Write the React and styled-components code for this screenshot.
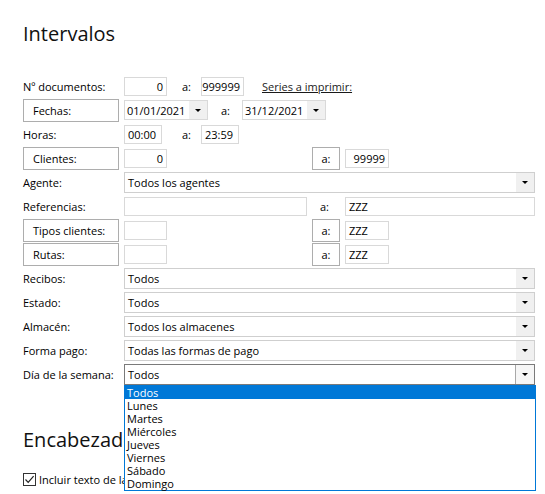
import React from 'react';
import styled, { createGlobalStyle, css } from 'styled-components';

const GlobalStyle = createGlobalStyle`
  html, body {
    margin: 0;
    padding: 0;
    background: #fff;
  }
  body {
    font-family: 'Open Sans', 'Noto Sans', 'DejaVu Sans', sans-serif;
    font-size: 11px;
    color: #000;
  }
`;

const Page = styled.div`
  width: 545px;
  height: 494px;
  overflow: hidden;
  padding-left: 23px;
  box-sizing: border-box;
`;

const Heading = styled.h2`
  margin: 0;
  font-size: 20px;
  font-weight: 400;
  line-height: 30px;
  color: #111;
  padding-top: ${(p) => p.$top || 0}px;
  white-space: nowrap;
`;

const Form = styled.div`
  margin-top: 25px;
`;

const Row = styled.div`
  position: relative;
  display: flex;
  align-items: center;
  height: 24px;
`;

const Label = styled.div`
  width: 101px;
  flex-shrink: 0;
  white-space: nowrap;
`;

const LabelButton = styled.div`
  width: 96px;
  height: 23px;
  margin-right: 5px;
  box-sizing: border-box;
  border: 1px solid #adadad;
  padding-left: 9px;
  display: flex;
  align-items: center;
  flex-shrink: 0;
  background: #fff;
`;

const ToLabel = styled.div`
  width: ${(p) => p.$w}px;
  padding-left: ${(p) => p.$pad}px;
  box-sizing: border-box;
  flex-shrink: 0;
`;

const ToButton = styled.div`
  width: 28px;
  height: 23px;
  margin-left: ${(p) => p.$left}px;
  margin-right: 5px;
  box-sizing: border-box;
  border: 1px solid #adadad;
  display: flex;
  align-items: center;
  justify-content: center;
  flex-shrink: 0;
`;

const TextBox = styled.div`
  width: ${(p) => p.$w}px;
  height: 19px;
  box-sizing: border-box;
  border: 1px solid #d9d9d9;
  padding: 0 3px;
  display: flex;
  align-items: center;
  justify-content: ${(p) => (p.$right ? 'flex-end' : 'flex-start')};
  flex-shrink: 0;
  white-space: nowrap;
`;

const Arrow = styled.span`
  width: 0;
  height: 0;
  border-left: 3px solid transparent;
  border-right: 3px solid transparent;
  border-top: 3px solid #000;
`;

const ArrowBox = styled.div`
  width: 18px;
  align-self: stretch;
  background: #f0f0f0;
  display: flex;
  align-items: center;
  justify-content: center;
  ${(p) =>
    p.$focused &&
    css`
      background: #f6f6f6;
      border-left: 1px solid #a8a8a8;
    `}
`;

const DateBox = styled.div`
  width: 84px;
  height: 20px;
  box-sizing: border-box;
  border: 1px solid #d9d9d9;
  display: flex;
  align-items: center;
  flex-shrink: 0;
  span.value {
    flex: 1;
    padding-left: 2px;
  }
`;

const SeriesLink = styled.span`
  margin-left: 18px;
  text-decoration: underline;
  color: #1a1a1a;
  white-space: nowrap;
`;

const SelectWrap = styled.div`
  position: relative;
  width: 411px;
  flex-shrink: 0;
`;

const SelectBox = styled.div`
  height: 21px;
  box-sizing: border-box;
  border: 1px solid ${(p) => (p.$focused ? '#7a7a7a' : '#cfcfcf')};
  display: flex;
  align-items: center;
  span.value {
    flex: 1;
    padding-left: 3px;
  }
`;

const DropList = styled.ul`
  position: absolute;
  top: 100%;
  left: 0;
  width: 412px;
  margin: 0;
  padding: 0;
  list-style: none;
  box-sizing: border-box;
  border: 1px solid #0078d7;
  background: #fff;
  z-index: 10;
`;

const DropItem = styled.li`
  height: 13px;
  line-height: 13px;
  padding-left: 2px;
  ${(p) =>
    p.$active &&
    css`
      background: #0078d7;
      color: #fff;
    `}
`;

const CheckRow = styled.div`
  display: flex;
  align-items: center;
  margin-top: 17px;
  gap: 3px;
  white-space: nowrap;
`;

const CheckBox = styled.span`
  width: 13px;
  height: 13px;
  box-sizing: border-box;
  border: 1px solid #333;
  display: flex;
  align-items: center;
  justify-content: center;
  background: #fff;
`;

const Select = ({ value, focused, children }) => (
  <SelectWrap>
    <SelectBox $focused={focused}>
      <span className="value">{value}</span>
      <ArrowBox $focused={focused}>
        <Arrow />
      </ArrowBox>
    </SelectBox>
    {children}
  </SelectWrap>
);

const DateField = ({ value }) => (
  <DateBox>
    <span className="value">{value}</span>
    <ArrowBox>
      <Arrow />
    </ArrowBox>
  </DateBox>
);

const days = ['Todos', 'Lunes', 'Martes', 'Miércoles', 'Jueves', 'Viernes', 'Sábado', 'Domingo'];

const App = () => (
  <Page>
    <GlobalStyle />
    <Heading $top={19}>Intervalos</Heading>
    <Form>
      <Row>
        <Label>Nº documentos:</Label>
        <TextBox $w={43} $right>0</TextBox>
        <ToLabel $w={34} $pad={15}>a:</ToLabel>
        <TextBox $w={43} $right>999999</TextBox>
        <SeriesLink>Series a imprimir:</SeriesLink>
      </Row>
      <Row>
        <LabelButton>Fechas:</LabelButton>
        <DateField value="01/01/2021" />
        <ToLabel $w={34} $pad={13}>a:</ToLabel>
        <DateField value="31/12/2021" />
      </Row>
      <Row>
        <Label>Horas:</Label>
        <TextBox $w={38}>00:00</TextBox>
        <ToLabel $w={39} $pad={20}>a:</ToLabel>
        <TextBox $w={38}>23:59</TextBox>
      </Row>
      <Row>
        <LabelButton>Clientes:</LabelButton>
        <TextBox $w={43} $right>0</TextBox>
        <ToButton $left={145}>a:</ToButton>
        <TextBox $w={44} $right>99999</TextBox>
      </Row>
      <Row>
        <Label>Agente:</Label>
        <Select value="Todos los agentes" />
      </Row>
      <Row>
        <Label>Referencias:</Label>
        <TextBox $w={183} />
        <ToLabel $w={38} $pad={13}>a:</ToLabel>
        <TextBox $w={190}>ZZZ</TextBox>
      </Row>
      <Row>
        <LabelButton>Tipos clientes:</LabelButton>
        <TextBox $w={43} />
        <ToButton $left={145}>a:</ToButton>
        <TextBox $w={44}>ZZZ</TextBox>
      </Row>
      <Row>
        <LabelButton>Rutas:</LabelButton>
        <TextBox $w={43} />
        <ToButton $left={145}>a:</ToButton>
        <TextBox $w={44}>ZZZ</TextBox>
      </Row>
      <Row>
        <Label>Recibos:</Label>
        <Select value="Todos" />
      </Row>
      <Row>
        <Label>Estado:</Label>
        <Select value="Todos" />
      </Row>
      <Row>
        <Label>Almacén:</Label>
        <Select value="Todos los almacenes" />
      </Row>
      <Row>
        <Label>Forma pago:</Label>
        <Select value="Todas las formas de pago" />
      </Row>
      <Row>
        <Label>Día de la semana:</Label>
        <Select value="Todos" focused>
          <DropList>
            {days.map((d, i) => (
              <DropItem key={d} $active={i === 0}>
                {d}
              </DropItem>
            ))}
          </DropList>
        </Select>
      </Row>
    </Form>
    <Heading $top={39}>Encabezados</Heading>
    <CheckRow>
      <CheckBox>
        <svg width="11" height="11" viewBox="0 0 11 11">
          <path d="M1.5 5.5 L4.2 8.3 L9.6 2.2" fill="none" stroke="#222" strokeWidth="1.2" />
        </svg>
      </CheckBox>
      <span>Incluir texto de la cabecera</span>
    </CheckRow>
  </Page>
);

export default App;
